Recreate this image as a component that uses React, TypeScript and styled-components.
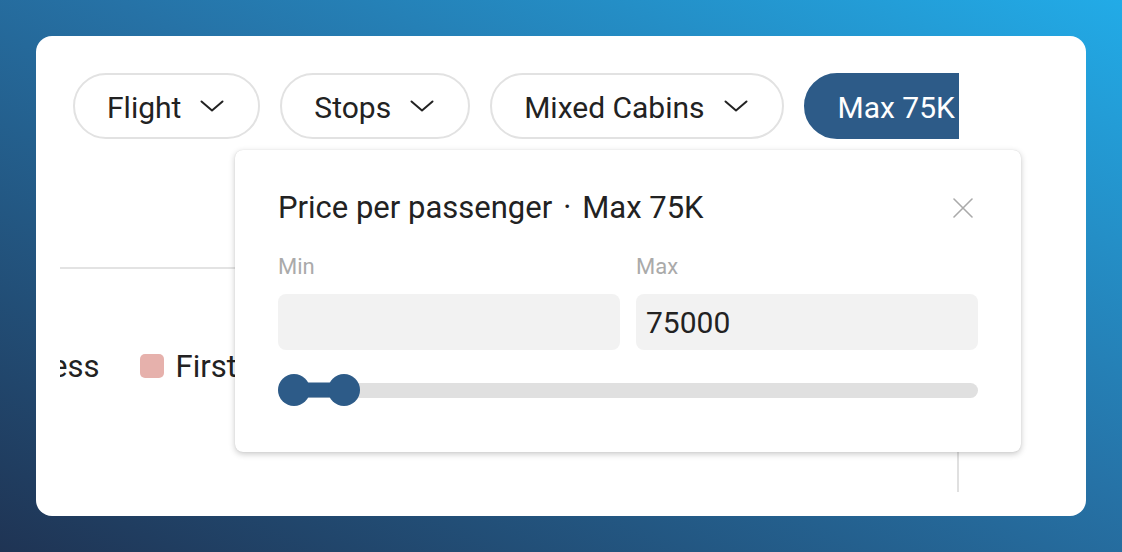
import React from "react";
import styled, { createGlobalStyle } from "styled-components";

const PRIMARY = "#2d5b88";
const SLIDER_MAX = 1000000;
const THUMB = 32;

const GlobalStyle = createGlobalStyle`
  * { box-sizing: border-box; }
  html, body { margin: 0; padding: 0; }
  body {
    width: 1122px;
    height: 552px;
    overflow: hidden;
    background: linear-gradient(to top right, #1f3454 0%, #2672a6 55%, #22abe7 100%);
    font-family: Roboto, "Noto Sans", Arial, sans-serif;
    color: #222;
  }
`;

const Page = styled.div`
  padding: 36px;
`;

const Card = styled.div`
  position: relative;
  width: 1050px;
  height: 480px;
  padding-left: 24px;
  background: #fff;
  border-radius: 16px;
`;

const Viewport = styled.div`
  width: 899px;
  height: 456px;
  overflow: hidden;
  display: flex;
  flex-direction: column;
`;

const PillRow = styled.div`
  display: flex;
  gap: 20px;
  margin-top: 37px;
  padding-left: 13px;
  flex-wrap: nowrap;
`;

const Pill = styled.button<{ $active?: boolean }>`
  flex: none;
  display: flex;
  align-items: center;
  gap: 19px;
  height: 66px;
  padding: 3px 34px 0 32px;
  border-radius: 33px;
  border: 2px solid ${({ $active }) => ($active ? PRIMARY : "#e2e2e2")};
  background: ${({ $active }) => ($active ? PRIMARY : "#fff")};
  color: ${({ $active }) => ($active ? "#fff" : "#222")};
  font-family: inherit;
  font-size: 30px;
  line-height: 1;
  white-space: nowrap;
  cursor: pointer;

  svg {
    margin-top: -3px;
  }
`;

const Divider = styled.div`
  height: 2px;
  margin-top: 128px;
  background: #e3e3e3;
`;

const Legend = styled.div<{ $scroll: number }>`
  display: flex;
  align-items: center;
  gap: 40px;
  height: 32px;
  margin-top: 81px;
  margin-left: ${({ $scroll }) => -$scroll}px;
  white-space: nowrap;
`;

const LegendItem = styled.div`
  display: flex;
  align-items: center;
  gap: 12px;
  font-size: 31px;
  color: #222;
`;

const Swatch = styled.span<{ $color: string }>`
  width: 24px;
  height: 24px;
  border-radius: 5px;
  background: ${({ $color }) => $color};
`;

const ChartArea = styled.div`
  height: 110px;
  border-right: 2px solid #e0e0e0;
`;

const Popover = styled.div`
  position: absolute;
  left: 199px;
  top: 114px;
  width: 786px;
  padding: 42px 43px 46px;
  background: #fff;
  border-radius: 8px;
  box-shadow: 0 2px 6px rgba(0, 0, 0, 0.22), 0 0 1px rgba(0, 0, 0, 0.15);
`;

const Header = styled.div`
  display: flex;
  align-items: center;
  justify-content: space-between;
  height: 32px;
`;

const Title = styled.h2`
  margin: 0;
  font-size: 31px;
  font-weight: 400;
  line-height: 32px;
  color: #222;
`;

const Dot = styled.span`
  padding: 0 11px;
`;

const CloseButton = styled.button`
  display: flex;
  align-items: center;
  justify-content: center;
  width: 30px;
  height: 30px;
  padding: 0;
  border: none;
  background: none;
  color: #aaa;
  cursor: pointer;
`;

const Fields = styled.div`
  display: grid;
  grid-template-columns: 1fr 1fr;
  gap: 16px;
  margin-top: 31px;
`;

const Field = styled.label`
  display: flex;
  flex-direction: column;
  gap: 15px;
`;

const FieldLabel = styled.span`
  font-size: 22px;
  line-height: 24px;
  color: #aaa;
`;

const FieldInput = styled.input`
  width: 100%;
  height: 56px;
  padding: 0 10px;
  border: none;
  border-radius: 8px;
  background: #f2f2f2;
  font-family: inherit;
  font-size: 30px;
  color: #222;
  outline: none;
`;

const Slider = styled.div`
  position: relative;
  display: flex;
  align-items: center;
  height: ${THUMB}px;
  margin-top: 24px;
`;

const Track = styled.div`
  width: 100%;
  height: 15px;
  border-radius: 8px;
  background: #e0e0e0;
`;

const Fill = styled.div`
  position: absolute;
  top: 50%;
  height: 15px;
  transform: translateY(-50%);
  background: ${PRIMARY};
`;

const Thumb = styled.div`
  position: absolute;
  top: 0;
  width: ${THUMB}px;
  height: ${THUMB}px;
  margin-left: -${THUMB / 2}px;
  border-radius: 50%;
  background: ${PRIMARY};
`;

const Chevron = () => (
  <svg width="24" height="12" viewBox="0 0 24 12" fill="none">
    <path d="M1.5 1.5 L12 10.5 L22.5 1.5" stroke="currentColor" strokeWidth="2" strokeLinecap="round" strokeLinejoin="round" />
  </svg>
);

const CloseIcon = () => (
  <svg width="20" height="20" viewBox="0 0 20 20" fill="none">
    <path d="M1 1 L19 19 M19 1 L1 19" stroke="currentColor" strokeWidth="1.6" strokeLinecap="round" />
  </svg>
);

const filters = [
  { label: "Flight" },
  { label: "Stops" },
  { label: "Mixed Cabins" },
  { label: "Max 75K", active: true },
];

const legend = [
  { label: "Business", color: "#8fb3d6" },
  { label: "First", color: "#e6b1ac" },
];

const minValue = 0;
const maxValue = 75000;

export default function App() {
  const trackWidth = 700;
  const pos = (v: number) => THUMB / 2 + (v / SLIDER_MAX) * (trackWidth - THUMB);
  const left = pos(minValue);
  const right = pos(maxValue);

  return (
    <>
      <GlobalStyle />
      <Page>
        <Card>
          <Viewport>
            <PillRow>
              {filters.map((f) => (
                <Pill key={f.label} $active={f.active}>
                  {f.label}
                  <Chevron />
                </Pill>
              ))}
            </PillRow>
            <Divider />
            <Legend $scroll={122}>
              {legend.map((l) => (
                <LegendItem key={l.label}>
                  <Swatch $color={l.color} />
                  {l.label}
                </LegendItem>
              ))}
            </Legend>
            <ChartArea />
          </Viewport>

          <Popover>
            <Header>
              <Title>
                Price per passenger<Dot>·</Dot>Max 75K
              </Title>
              <CloseButton aria-label="Close">
                <CloseIcon />
              </CloseButton>
            </Header>
            <Fields>
              <Field>
                <FieldLabel>Min</FieldLabel>
                <FieldInput readOnly defaultValue="" />
              </Field>
              <Field>
                <FieldLabel>Max</FieldLabel>
                <FieldInput readOnly defaultValue={String(maxValue)} />
              </Field>
            </Fields>
            <Slider>
              <Track />
              <Fill style={{ left, width: right - left }} />
              <Thumb style={{ left }} />
              <Thumb style={{ left: right }} />
            </Slider>
          </Popover>
        </Card>
      </Page>
    </>
  );
}
